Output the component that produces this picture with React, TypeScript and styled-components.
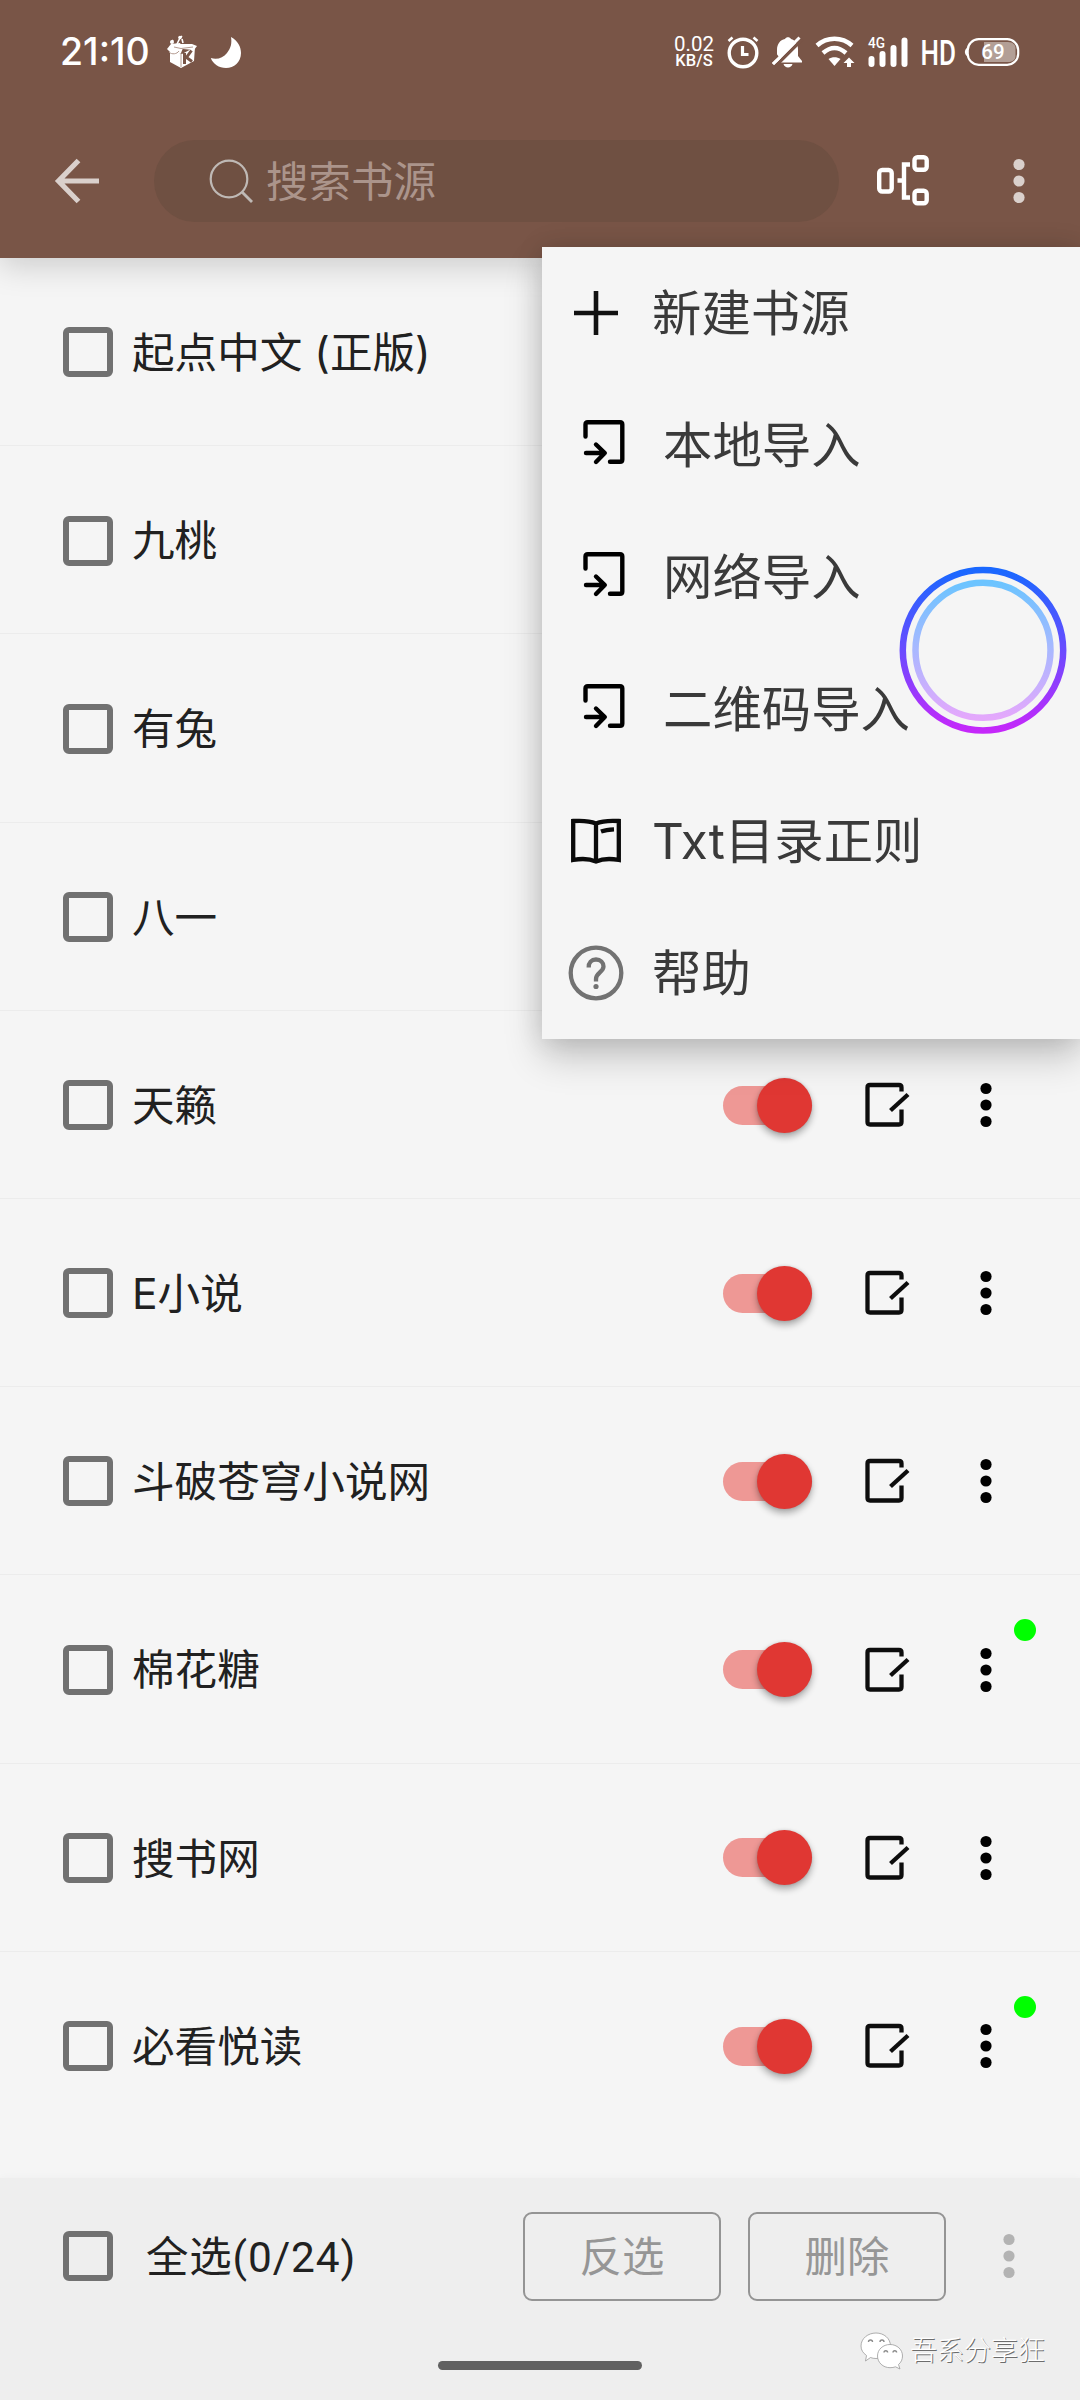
import React from "react";
import styled, { createGlobalStyle } from "styled-components";

const GlobalStyle = createGlobalStyle`
  * { box-sizing: border-box; }
  html, body { margin: 0; padding: 0; background: #f5f5f5; }
  body { font-family: Roboto, "Noto Sans CJK SC", sans-serif; }
  svg { display: block; flex: none; overflow: visible; }
`;

const Screen = styled.main`
  position: relative;
  width: 1080px;
  height: 2400px;
  display: flex;
  flex-direction: column;
  background: #f5f5f5;
  overflow: hidden;
`;

const Header = styled.header`
  position: relative;
  z-index: 1;
  flex: none;
  height: 258px;
  background: #795547;
  box-shadow: 0 8px 30px rgba(0, 0, 0, 0.17);
`;

const StatusBar = styled.div`
  height: 104px;
  padding: 0 60px 0 60px;
  display: flex;
  align-items: center;
  color: #fff;
`;

const Clock = styled.span`
  width: 106px;
  font-family: Inter, Roboto, sans-serif;
  font-size: 37.5px;
  font-weight: 500;
  line-height: 104px;
  white-space: nowrap;
`;

const StatusRight = styled.div`
  margin-left: auto;
  display: flex;
  align-items: center;
`;

const NetSpeed = styled.div`
  width: 40px;
  margin-right: 13px;
  display: flex;
  flex-direction: column;
  align-items: center;
  white-space: nowrap;
`;

const SpeedValue = styled.span`
  font-size: 20.5px;
  line-height: 17px;
  font-weight: 400;
`;

const SpeedUnit = styled.span`
  font-size: 16.5px;
  line-height: 15px;
  font-weight: 500;
`;

const Toolbar = styled.div`
  height: 154px;
  padding: 0 54px 0 54px;
  display: flex;
  align-items: flex-start;
`;

const IconButton = styled.span<{ $top: number; $left?: number }>`
  flex: none;
  margin-top: ${(p) => p.$top}px;
  margin-left: ${(p) => p.$left ?? 0}px;
`;

const SearchBox = styled.div`
  width: 685px;
  height: 82px;
  margin-top: 36px;
  margin-left: 54px;
  padding-left: 55px;
  border-radius: 41px;
  background: #6f5042;
  display: flex;
  align-items: center;
`;

const SearchHint = styled.span`
  margin-left: 11px;
  padding-top: 3px;
  font-size: 42.5px;
  line-height: 79px;
  color: #ab948b;
`;

const List = styled.ul`
  flex: 1;
  margin: 0;
  padding: 0;
  list-style: none;
`;

const Row = styled.li`
  position: relative;
  height: 188.2px;
  padding: 1.5px 87px 0 63px;
  border-bottom: 1px solid #ececec;
  display: flex;
  align-items: center;

  &:last-child {
    border-bottom-color: transparent;
  }
`;

const Checkbox = styled.span`
  flex: none;
  width: 50px;
  height: 50px;
  border: 6px solid #717171;
  border-radius: 6px;
`;

const SourceName = styled.span`
  flex: 1;
  margin-left: 19px;
  padding-top: 1.5px;
  font-family: Inter, "Noto Sans CJK SC", sans-serif;
  font-size: 42.6px;
  line-height: 60px;
  color: #212121;
  white-space: nowrap;
`;

const Track = styled.span`
  flex: none;
  width: 89px;
  height: 39px;
  border-radius: 20px;
  background: #ee9895;
  display: flex;
  align-items: center;
  justify-content: flex-end;
`;

const Thumb = styled.span`
  flex: none;
  width: 55px;
  height: 55px;
  border-radius: 50%;
  background: #e03733;
  box-shadow: 0 4px 7px rgba(0, 0, 0, 0.32), 0 0 3px rgba(0, 0, 0, 0.12);
`;

const Gap = styled.span<{ $w: number }>`
  flex: none;
  width: ${(p) => p.$w}px;
`;

const StatusDot = styled.span`
  position: absolute;
  right: 44px;
  top: 44px;
  width: 22px;
  height: 22px;
  border-radius: 50%;
  background: #00ff00;
`;

const Footer = styled.footer`
  position: relative;
  flex: none;
  height: 222px;
  background: #eeeeee;
  box-shadow: 0 0 8px rgba(0, 0, 0, 0.03);
`;

const ActionBar = styled.div`
  height: 156px;
  padding-left: 63px;
  padding-right: 64px;
  display: flex;
  align-items: center;
`;

const SelectAll = styled.span`
  flex: 1;
  margin-left: 33px;
  padding-top: 3px;
  font-size: 42.4px;
  line-height: 60px;
  color: #212121;
  letter-spacing: 0.9px;
  white-space: nowrap;
`;

const ActionButton = styled.button`
  flex: none;
  width: 198px;
  height: 89px;
  margin: 0 0 0 27px;
  padding: 3px 0 0;
  border: 2px solid #949494;
  border-radius: 9px;
  background: transparent;
  font: inherit;
  font-size: 42.4px;
  line-height: 60px;
  color: #969696;
`;

const HomeIndicator = styled.div`
  width: 204px;
  height: 9px;
  margin: 27px auto 0;
  border-radius: 5px;
  background: #616161;
`;

const Menu = styled.nav`
  position: absolute;
  z-index: 2;
  left: 542px;
  top: 247px;
  width: 538px;
  height: 792px;
  background: #f5f5f5;
  box-shadow: 0 18px 36px rgba(0, 0, 0, 0.2), 0 0 26px rgba(0, 0, 0, 0.12);
`;

const MenuItem = styled.div`
  height: 132px;
  padding-left: 25px;
  display: flex;
  align-items: center;
`;

const MenuIcon = styled.span<{ $indent?: boolean }>`
  width: 58px;
  margin-left: ${(p) => (p.$indent ? 8 : 0)}px;
  padding-bottom: ${(p) => (p.$indent ? 6 : 0)}px;
  display: flex;
  justify-content: center;
`;

const MenuLabel = styled.span<{ $indent?: boolean }>`
  margin-left: ${(p) => (p.$indent ? 30 : 27)}px;
  padding-top: 1px;
  font-family: Inter, "Noto Sans CJK SC", sans-serif;
  font-size: 49.4px;
  line-height: 65px;
  color: #3a3a3a;
  white-space: nowrap;
`;

const TouchRing = styled.div`
  position: absolute;
  z-index: 3;
  left: 899px;
  top: 566px;
`;

const Watermark = styled.div`
  position: absolute;
  right: 35px;
  bottom: 29px;
  display: flex;
  align-items: center;
`;

const WatermarkText = styled.span`
  margin-left: 6px;
  font-size: 27px;
  line-height: 40px;
  font-weight: 300;
  color: #fff;
  text-shadow: 1px 1px 0.5px #6d6d6d;
`;

const BoxIcon = () => (
  <svg width="32" height="34" viewBox="0 0 32 34">
    <path d="M4 15L16 19L29 12L28 26L15 33L4 27Z" fill="#fff" />
    <path d="M1 14L5 9L14 8L17 13L15 18L8 21Z" fill="#fff" />
    <path d="M13 9L26 9L31 11L28 15L17 14Z" fill="#fff" />
    <path d="M3 17C6 20 11 19 13 16M15 19L15 32M8 12L15 13.500L27 12" stroke="#b39a90" strokeWidth="1" fill="none" />
    <path d="M18.500 18V29M25.500 15.500L20.500 22.500L26 26.500" stroke="#795547" strokeWidth="3" fill="none" />
    <path d="M5 8L7 5M11 9L14 3L16 1M17 8L16 4" stroke="#fff" strokeWidth="1.600" fill="none" />
    <circle cx="6" cy="7" r="2" fill="#fff" />
    <circle cx="14" cy="2.500" r="1.800" fill="#fff" />
  </svg>
);

const MoonIcon = () => (
  <svg width="32" height="33" viewBox="0 0 32 33">
    <path d="M21 1C28 5 31 11 31 17C31 26 24 32 16 32C9 32 3 28 .8 22C7 24 13 22 17 17C21 12 22 7 21 1Z" fill="#fff" />
  </svg>
);

const AlarmIcon = () => (
  <svg width="32" height="33" viewBox="0 0 32 33" fill="none" stroke="#fff">
    <circle cx="16" cy="17" r="13.800" strokeWidth="3.400" />
    <path d="M15.500 10V18.500H21.500" strokeWidth="3.200" />
    <path d="M1.500 5L5.500 1.500M30.500 5L26.500 1.500" strokeWidth="2.600" />
  </svg>
);

const BellOffIcon = () => (
  <svg width="31" height="32" viewBox="0 0 31 32">
    <path d="M5 20V14C5 8 8 4 13 3C14 .5 18 .5 19 3C23 4 26 8 26 13V20L30 25V26.500H1.500Z" fill="#fff" />
    <path d="M11.500 28H20.500C20 30 18 31.500 16 31.500C14 31.500 12 30 11.500 28Z" fill="#fff" />
    <path d="M3 30.500L30 3.500" stroke="#795547" strokeWidth="3.200" />
    <path d="M1 28L27.500 1.500" stroke="#fff" strokeWidth="3" />
    <path d="M-1 27L4 17L7 21Z" fill="#795547" />
    <path d="M1 28L8 21" stroke="#fff" strokeWidth="3" />
  </svg>
);

const WifiIcon = () => (
  <svg width="40" height="32" viewBox="0 0 40 32">
    <path d="M2 9.500C12 .5 27 .5 37 9.500" stroke="#fff" strokeWidth="4.400" fill="none" />
    <path d="M8 17C15.500 10.500 23.500 10.500 31 17" stroke="#fff" strokeWidth="4.400" fill="none" />
    <path d="M13.500 23C17 20.500 22 20.500 25.500 23L19.500 30Z" fill="#fff" />
    <path d="M34 21.500L39.500 27H36V31H32V27H28.500Z" fill="#fff" />
  </svg>
);

const SignalIcon = () => (
  <svg width="40" height="32" viewBox="0 0 40 32" fill="#fff">
    <text x="0" y="12" fontFamily="Roboto, sans-serif" fontSize="14.500" fontWeight="500" textLength="17" lengthAdjust="spacingAndGlyphs">4G</text>
    <rect x="0.500" y="20" width="6" height="11" rx="3" />
    <rect x="11.500" y="15" width="6" height="16" rx="3" />
    <rect x="22.500" y="9" width="6" height="22" rx="3" />
    <rect x="33.500" y="1.500" width="6" height="29.500" rx="3" />
  </svg>
);

const HdBadge = () => (
  <svg width="36" height="44" viewBox="0 0 36 44">
    <text x="0.500" y="34.500" fill="#fff" fontFamily="Roboto, sans-serif" fontSize="35" fontWeight="500" textLength="35.500" lengthAdjust="spacingAndGlyphs">HD</text>
  </svg>
);

const BatteryIcon = () => (
  <svg width="56" height="28" viewBox="0 0 56 28">
    <path d="M3.500 9.500C0 12 0 16 3.500 18.500Z" fill="#fff" />
    <rect x="3.700" y="1.200" width="50.500" height="25.600" rx="11" fill="none" stroke="#fff" strokeWidth="2.200" />
    <path d="M20 4H44C49 4 51.500 7 51.500 10V18C51.500 21.500 49 24 44 24H20Z" fill="#b39f96" />
    <text x="29" y="21" textAnchor="middle" fill="#fff" fontFamily="Roboto, sans-serif" fontSize="20.500" fontWeight="500">69</text>
  </svg>
);

const BackIcon = () => (
  <svg width="46" height="46" viewBox="0 0 46 46" fill="none" stroke="#dad0cc" strokeWidth="5.200">
    <path d="M24.500 2.500L4.500 23L24.500 43.500M4.500 23H45" />
  </svg>
);

const SearchIcon = () => (
  <svg width="46" height="46" viewBox="0 0 46 46" fill="none" stroke="#bfb9b5" strokeWidth="2.200">
    <circle cx="20" cy="21" r="18.300" />
    <path d="M33 34L43 44" strokeWidth="2.800" />
  </svg>
);

const GroupIcon = () => (
  <svg width="54" height="52" viewBox="0 0 54 52" fill="none" stroke="#fff" strokeWidth="4.400">
    <rect x="2.200" y="16" width="12.500" height="21.500" rx="3" />
    <rect x="37.500" y="3.300" width="12.200" height="12.500" rx="3" />
    <rect x="37.500" y="36.800" width="12.200" height="12.500" rx="3" />
    <path d="M33 10.500H27V43.500H33M20.500 26.500H27" />
  </svg>
);

const MoreIcon = ({ color }: { color: string }) => (
  <svg width="14" height="46" viewBox="0 0 14 46" fill={color}>
    <circle cx="7" cy="6.500" r="5.600" />
    <circle cx="7" cy="23" r="5.600" />
    <circle cx="7" cy="39.500" r="5.600" />
  </svg>
);

const EditIcon = () => (
  <svg width="46" height="46" viewBox="0 0 46 46" fill="none" stroke="#0d0d0d" strokeWidth="4.300">
    <path d="M36.500 9.500V5.500Q36.500 3 34 3H5Q2.500 3 2.500 5.500V40Q2.500 42.500 5 42.500H34Q36.500 42.500 36.500 40V27.500" />
    <path d="M25.500 28.500L43 12.500" />
  </svg>
);

const PlusIcon = () => (
  <svg width="46" height="46" viewBox="0 0 46 46" fill="none" stroke="#111" strokeWidth="4.600">
    <path d="M23 1V45M1 23H45" />
  </svg>
);

const ImportIcon = () => (
  <svg width="44" height="46" viewBox="0 0 44 46" fill="none" stroke="#000" strokeWidth="4.400" strokeLinecap="round" strokeLinejoin="round">
    <path d="M3.500 17.500V5.500Q3.500 3.200 5.800 3.200H38Q40.300 3.200 40.300 5.500V40.500Q40.300 42.800 38 42.800H28" />
    <path d="M4 34H22.500M14 25.500L22.800 34L14 43" />
  </svg>
);

const BookIcon = () => (
  <svg width="50" height="46" viewBox="0 0 50 46" fill="none" stroke="#0a0a0a" strokeWidth="4.300">
    <path d="M25 5.500C18 2.500 10 2.500 2.200 3V42C10 40.500 18 40.500 25 43.500C32 40.500 40 40.500 47.800 42V3C40 2.500 32 2.500 25 5.500Z" />
    <path d="M25 5.500V43.500" />
    <path d="M30 13.500C34 12 38 11.500 43 11.300" />
  </svg>
);

const HelpIcon = () => (
  <svg width="56" height="56" viewBox="0 0 56 56" fill="none" stroke="#727272" strokeWidth="4.300">
    <circle cx="28" cy="28" r="25.300" />
    <path d="M20.700 22.500C20.500 17.500 23.500 14.500 28 14.500C32.500 14.500 35.500 17.500 35.500 21.500C35.500 27 28 28 28 34V36.500" />
    <circle cx="28" cy="41.500" r="2.600" fill="#727272" stroke="none" />
  </svg>
);

const WeChatIcon = () => (
  <svg width="44" height="38" viewBox="0 0 44 38">
    <g stroke="#9b9b9b" strokeWidth="0.800">
      <path d="M16 1C24 1 30.500 6.500 30.500 14C30.500 21 24 26.500 16 26.500C14 26.500 12 26.200 10.500 25.500L5.500 29L6.500 23.500C3 21 1 18 1 14C1 6.500 8 1 16 1Z" fill="#fff" />
      <path d="M30 12.500C37 12.500 42.500 17.500 42.500 24C42.500 27.500 41 30.500 38.500 32.500L40 37L35.500 34.800C34 35.400 32 35.700 30 35.700C23 35.700 17.500 30.500 17.500 24C17.500 17.500 23 12.500 30 12.500Z" fill="#fff" />
    </g>
    <g fill="none" stroke="#8b8b8b" strokeWidth="1.400">
      <path d="M8.500 10A2 2 0 0 1 12.500 10M20 10A2 2 0 0 1 24 10M24 20.500A1.800 1.800 0 0 1 27.600 20.500M33 20.500A1.800 1.800 0 0 1 36.600 20.500" />
    </g>
  </svg>
);

const sources = [
  { name: "起点中文 (正版)" },
  { name: "九桃" },
  { name: "有兔" },
  { name: "八一" },
  { name: "天籁" },
  { name: "E小说" },
  { name: "斗破苍穹小说网" },
  { name: "棉花糖", dot: true },
  { name: "搜书网" },
  { name: "必看悦读", dot: true },
];

const menuItems = [
  { label: "新建书源", icon: <PlusIcon /> },
  { label: "本地导入", icon: <ImportIcon />, indent: true },
  { label: "网络导入", icon: <ImportIcon />, indent: true },
  { label: "二维码导入", icon: <ImportIcon />, indent: true },
  { label: "Txt目录正则", icon: <BookIcon /> },
  { label: "帮助", icon: <HelpIcon /> },
];

export default function App() {
  return (
    <>
      <GlobalStyle />
      <Screen>
        <Header>
          <StatusBar>
            <Clock>21:10</Clock>
            <BoxIcon />
            <Gap $w={12} />
            <MoonIcon />
            <StatusRight>
              <NetSpeed>
                <SpeedValue>0.02</SpeedValue>
                <SpeedUnit>KB/S</SpeedUnit>
              </NetSpeed>
              <AlarmIcon />
              <Gap $w={13} />
              <BellOffIcon />
              <Gap $w={12} />
              <WifiIcon />
              <Gap $w={13} />
              <SignalIcon />
              <Gap $w={12} />
              <HdBadge />
              <Gap $w={8} />
              <BatteryIcon />
            </StatusRight>
          </StatusBar>
          <Toolbar>
            <IconButton $top={54}>
              <BackIcon />
            </IconButton>
            <SearchBox>
              <SearchIcon />
              <SearchHint>搜索书源</SearchHint>
            </SearchBox>
            <IconButton $top={50} $left={38}>
              <GroupIcon />
            </IconButton>
            <IconButton $top={54} $left={81}>
              <MoreIcon color="#dad0cc" />
            </IconButton>
          </Toolbar>
        </Header>
        <List>
          {sources.map((s) => (
            <Row key={s.name}>
              <Checkbox />
              <SourceName>{s.name}</SourceName>
              <Track>
                <Thumb />
              </Track>
              <Gap $w={53} />
              <EditIcon />
              <Gap $w={68} />
              <MoreIcon color="#000" />
              {s.dot && <StatusDot />}
            </Row>
          ))}
        </List>
        <Footer>
          <ActionBar>
            <Checkbox />
            <SelectAll>全选(0/24)</SelectAll>
            <ActionButton>反选</ActionButton>
            <ActionButton>删除</ActionButton>
            <Gap $w={56} />
            <MoreIcon color="#b3b3b3" />
          </ActionBar>
          <HomeIndicator />
          <Watermark>
            <WeChatIcon />
            <WatermarkText>吾系分享狂</WatermarkText>
          </Watermark>
        </Footer>
        <Menu>
          {menuItems.map((m) => (
            <MenuItem key={m.label}>
              <MenuIcon $indent={m.indent}>{m.icon}</MenuIcon>
              <MenuLabel $indent={m.indent}>{m.label}</MenuLabel>
            </MenuItem>
          ))}
        </Menu>
        <TouchRing>
          <svg width="168" height="168" viewBox="0 0 168 168" fill="none" strokeWidth="6.500">
            <defs>
              <linearGradient id="outer" x1="0" y1="0" x2="0" y2="1">
                <stop offset="0" stopColor="#1a68ff" />
                <stop offset="0.500" stopColor="#6a4bff" />
                <stop offset="1" stopColor="#c528fa" />
              </linearGradient>
              <linearGradient id="inner" x1="0" y1="0" x2="0" y2="1">
                <stop offset="0" stopColor="#6cc4ff" />
                <stop offset="0.500" stopColor="#a9b8ff" />
                <stop offset="1" stopColor="#e4a8fc" />
              </linearGradient>
            </defs>
            <circle cx="84" cy="84.300" r="80.200" stroke="url(#outer)" />
            <circle cx="84" cy="84.300" r="67.500" stroke="url(#inner)" />
          </svg>
        </TouchRing>
      </Screen>
    </>
  );
}
